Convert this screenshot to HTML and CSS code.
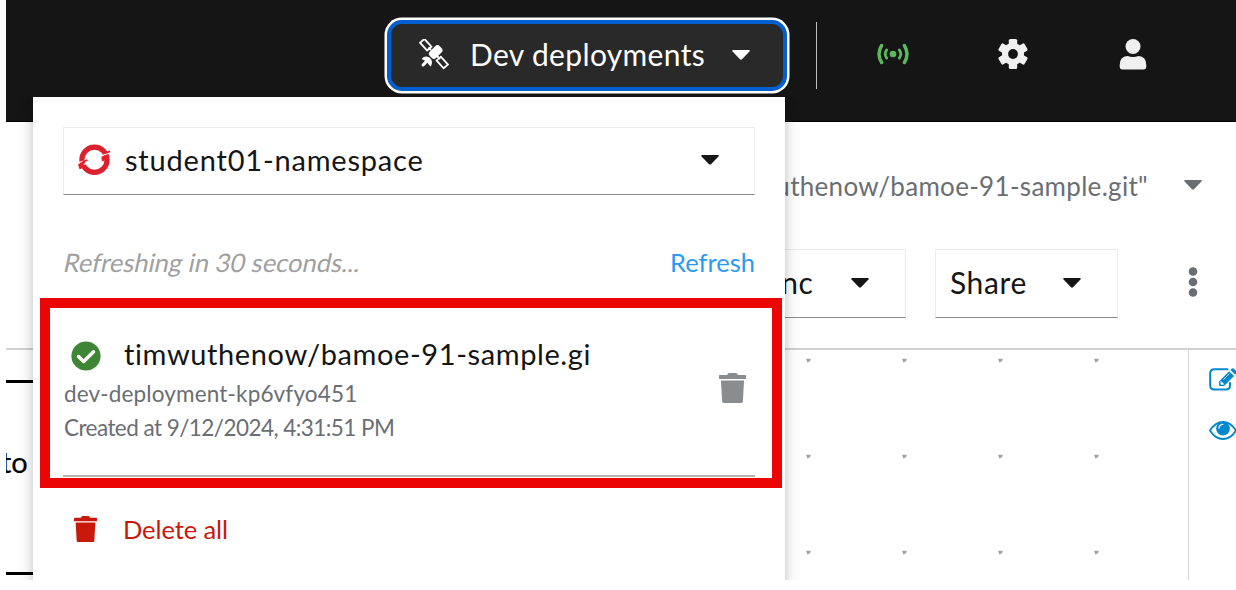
FILE: index.html
```html
<!DOCTYPE html>
<html lang="en">
<head>
<meta charset="utf-8">
<title>Dev deployments</title>
<link rel="stylesheet" href="styles.css">
</head>
<body>
<svg width="0" height="0" class="defs">
  <symbol id="caret" viewBox="0 0 18 10"><path d="M1.2 0H16.8Q18.6.2 17.2 1.8L10 9.3Q9 10.2 8 9.3L.8 1.8Q-.6.2 1.2 0Z" fill="currentColor"/></symbol>
  <symbol id="trash" viewBox="0 0 448 512" preserveAspectRatio="none"><path d="M432 32H312l-9.400-18.700A24 24 0 0 0 281.100 0H166.800a23.720 23.720 0 0 0-21.400 13.300L136 32H16A16 16 0 0 0 0 48v44a12 12 0 0 0 12 12h424a12 12 0 0 0 12-12V48a16 16 0 0 0-16-16zM32 128l20 360q2 24 26 24h292q24 0 26-24l20-360z" fill="currentColor"/></symbol>
</svg>
<div class="app">
  <header class="masthead">
    <button class="deploy-toggle">
      <svg class="satellite" width="30" height="31" viewBox="0 0 30 31">
        <g fill="none" stroke="currentColor" stroke-width="1.800">
          <rect x="1.500" y="2.800" width="10.500" height="5.800" transform="rotate(48 6.750 5.700)"/>
          <rect x="18" y="20.600" width="10.500" height="5.800" transform="rotate(48 23.250 23.500)"/>
          <path d="M9.500 8.500L12 11M18 17L21 20" stroke-width="2"/>
        </g>
        <g fill="currentColor">
          <rect x="9.700" y="8.500" width="14" height="9" rx="3.300" transform="rotate(-45 16.700 13)"/>
          <path d="M2.700 20Q5 15.600 10.600 18.600Q14.700 22.600 11.700 27.700L8.300 23.800L5.800 26.600Q4.500 28.200 2.800 27.200Q2 25.300 3.700 24.300L6 21.800Z"/>
        </g>
      </svg>
      <span class="deploy-label">Dev deployments</span>
      <svg width="18" height="10"><use href="#caret"/></svg>
    </button>
    <div class="divider"></div>
    <svg class="live" width="32" height="22" viewBox="0 0 32 22">
      <circle cx="16" cy="11" r="3.300" fill="#5cb85c"/>
      <g fill="none" stroke="#5cb85c" stroke-linecap="round">
        <path d="M4.600 2.500Q-.6 11 4.600 19.500M27.400 2.500Q32.600 11 27.400 19.500" stroke-width="3.400"/>
        <path d="M9.700 6.900Q6.700 11 9.700 15.100M22.300 6.900Q25.300 11 22.300 15.100" stroke-width="2.800"/>
      </g>
    </svg>
    <svg class="gear" width="30" height="30" viewBox="-15 -15 30 30">
      <g fill="#f0f0f0">
        <rect x="-4.200" y="-15" width="8.400" height="30" rx="1.600"/>
        <rect x="-4.200" y="-15" width="8.400" height="30" rx="1.600" transform="rotate(60)"/>
        <rect x="-4.200" y="-15" width="8.400" height="30" rx="1.600" transform="rotate(120)"/>
        <circle r="11"/>
      </g>
      <circle r="4.900" fill="#151515"/>
    </svg>
    <svg class="user" width="28" height="31" viewBox="0 0 28 31">
      <circle cx="14" cy="7.500" r="7.500" fill="#f0f0f0"/>
      <path d="M8.500 17Q14 19 19.500 17Q27.300 17.500 27.300 26V27.500Q27.300 30.500 24.500 30.500H3.500Q.7 30.500 .7 27.500V26Q.7 17.500 8.500 17Z" fill="#f0f0f0"/>
    </svg>
  </header>

  <div class="repo-row">
    <span class="repo-name">uthenow/bamoe-91-sample.git"</span>
    <svg width="18" height="10"><use href="#caret"/></svg>
  </div>
  <div class="toolbar">
    <div class="select sync"><span>Sync</span><svg width="18" height="10"><use href="#caret"/></svg></div>
    <div class="select share"><span>Share</span><svg width="18" height="10"><use href="#caret"/></svg></div>
    <svg class="kebab" width="10" height="32" viewBox="0 0 10 32" fill="#6a6e73"><circle cx="5" cy="5.500" r="4.300"/><circle cx="5" cy="16" r="4.300"/><circle cx="5" cy="26.500" r="4.300"/></svg>
  </div>
  <div class="workspace">
    <div class="node"><span>to</span></div>
    <svg class="grid" width="1182" height="230">
      <defs><pattern id="dots" x="32" y="8" width="96" height="96" patternUnits="userSpaceOnUse"><path d="M0 .8H5L4 3.300L1.500 4.800Z" fill="#a4a4a4"/></pattern></defs>
      <rect x="700" width="482" height="230" fill="url(#dots)"/>
    </svg>
    <aside class="tools">
      <svg width="28" height="23" viewBox="0 0 28 23">
        <path d="M18.500 1.200H5.500Q1.200 1.200 1.200 5.500V17.300Q1.200 21.500 5.500 21.500H17Q21 21.500 21 17.300V15" fill="none" stroke="#0088ce" stroke-width="2" stroke-linecap="round"/>
        <path d="M10.200 13.200L20.200 3.200L25 8L15 18H10.200ZM21.500 2L23 .6Q24 0 25 .8L27.500 3.200Q28.200 4.200 27.500 5.200L26.200 6.700Z" fill="#0088ce"/>
        <path d="M12 13.500L14.700 16.200H12ZM14.500 11.500L20.500 5.600" fill="#fff" stroke="#fff" stroke-width=".8"/>
      </svg>
      <svg width="28" height="19" viewBox="0 0 28 19">
        <path d="M1 9.500Q6.300 1 14 1T27 9.500Q21.700 18 14 18T1 9.500Z" fill="#fff" stroke="#0088ce" stroke-width="1.900"/>
        <circle cx="14" cy="7.600" r="6.900" fill="#0088ce"/>
        <path d="M10 7Q10.300 3.600 13.800 3.300" fill="none" stroke="#fff" stroke-width="1.300" stroke-linecap="round"/>
      </svg>
    </aside>
  </div>

  <section class="menu">
    <div class="select namespace">
      <svg width="33" height="32" viewBox="0 0 33 32">
        <circle cx="16.500" cy="15.800" r="12.600" fill="none" stroke="#db212f" stroke-width="5.200"/>
        <path d="M22.500 12.300L28 10.200M4.500 20.700L10.500 18.600M27.800 10.300L33 8.500M.3 18.800L5.500 17" stroke="#fff" stroke-width="1.200"/>
        <path d="M23.300 12.800L28.200 11.100L28.500 15.800L24 17.500ZM28 8.500L31.500 6.300L32.300 8L28.500 9.700ZM0 20.300L5.200 18.500L6.600 23.500L1.500 25.300ZM4 17.500L9 15.300L9.800 16.800L5 18.600Z" fill="#ee1c25"/>
      </svg>
      <span class="ns-name">student01-namespace</span>
      <svg class="ns-caret" width="18" height="10"><use href="#caret"/></svg>
    </div>
    <div class="refresh-row"><span class="countdown">Refreshing in 30 seconds...</span><a>Refresh</a></div>
    <div class="deployment">
      <div class="info">
        <div class="title">
          <svg width="30" height="30" viewBox="0 0 30 30"><circle cx="15" cy="15" r="14.600" fill="#3e8635"/><path d="M7.500 15.500L12.700 20.500L22.500 10.800" fill="none" stroke="#fff" stroke-width="3.500" stroke-linecap="round" stroke-linejoin="round"/></svg>
          <span>timwuthenow/bamoe-91-sample.gi</span>
        </div>
        <div class="meta id">dev-deployment-kp6vfyo451</div>
        <div class="meta created">Created at 9/12/2024, 4:31:51 PM</div>
      </div>
      <svg class="remove" width="27" height="30"><use href="#trash"/></svg>
    </div>
    <div class="delete-all"><svg width="23" height="26"><use href="#trash"/></svg><span>Delete all</span></div>
  </section>
  <div class="highlight"></div>
</div>
</body>
</html>
```
FILE: styles.css
```css
* { box-sizing: border-box; }
body { margin: 0; padding-left: 6px; background: #fff; font-family: Lato, "Open Sans", sans-serif; color: #151515; }
svg { display: block; flex: none; }
span, a { white-space: nowrap; }
.defs { position: absolute; }
.app { position: relative; width: 1230px; height: 580px; overflow: hidden; }

.masthead { height: 122px; background: #151515; border-bottom: 1px solid #000; display: flex; align-items: flex-start; color: #fff; }
.deploy-toggle { margin: 18px 0 0 379px; width: 404px; height: 75px; border: 2px solid #fff; border-radius: 17px; background: #292929; box-shadow: 0 0 0 .5px #fff, inset 0 0 0 4px #0060d0; display: flex; align-items: center; padding: 0 37px 2px 32px; color: #fff; font: 30px Lato, sans-serif; }
.deploy-label { margin: 0 0 2px 21px; flex: 1; text-align: left; letter-spacing: .35px; }
.divider { width: 1px; height: 67px; margin: 22px 0 0 27px; background: #c0c0c0; }
.live { margin: 43px 0 0 60px; }
.gear { margin: 39px 0 0 89px; }
.user { margin: 39px 0 0 91px; }

.repo-row { height: 127px; padding: 0 34px 2px 0; display: flex; justify-content: flex-end; align-items: center; color: #6a6e73; gap: 36px; }
.repo-name { font-size: 26px; letter-spacing: .3px; margin-top: 2px; }
.toolbar { height: 99px; display: flex; justify-content: flex-end; gap: 29px; padding-right: 38px; }
.select { height: 69px; border: 1px solid #ececec; border-bottom-color: #8a8d90; display: flex; align-items: center; font-size: 29px; background: #fff; }
.toolbar .select { justify-content: space-between; padding: 0 36px 2px 14px; font-size: 30px; letter-spacing: .6px; }
.toolbar .select span { margin-bottom: 1px; }
.sync { width: 172px; }
.share { width: 183px; }
.kebab { margin: 17px 0 0 41px; }
.workspace { height: 232px; border-top: 2px solid #d2d2d2; display: flex; }
.node { width: 60px; height: 195px; margin: 30px 0 0 0; border-top: 3px solid #000; border-bottom: 3px solid #000; color: #000; font-size: 29px; line-height: 157px; }
.node span { margin-left: -5px; -webkit-text-stroke: .2px #000; }
.grid { margin-left: -60px; }
.tools { width: 48px; border-left: 1px solid #d6d6d6; padding: 18px 0 0 20px; display: flex; flex-direction: column; gap: 30px; }

.menu { position: absolute; left: 27px; top: 97px; width: 752px; height: 500px; background: #fff; box-shadow: 0 8px 16px rgba(3,3,3,.16), 0 0 8px rgba(3,3,3,.12); padding: 30px; clip-path: inset(0 -30px -30px -30px); }
.namespace { height: 68px; padding: 0 35px 2px 14px; }
.ns-name { flex: 1; margin: 0 0 2px 14px; letter-spacing: .8px; }
.refresh-row { height: 103px; padding-top: 35px; display: flex; justify-content: space-between; font-size: 25.500px; line-height: 64px; }
.countdown { color: #a0a0a0; transform: skewX(-12deg); padding-left: 1px; }
.refresh-row a { color: #2b9af3; }
.deployment { height: 179px; border-bottom: 2px solid #b4b4b4; display: flex; justify-content: space-between; padding-top: 36px; }
.title { display: flex; align-items: center; gap: 23px; height: 43px; padding-left: 8px; font-size: 29px; letter-spacing: .6px; }
.title span { margin-bottom: 5px; }
.meta { color: #6a6e73; font-size: 22.500px; line-height: 34px; padding-left: 1px; }
.id { letter-spacing: .15px; }
.created { letter-spacing: -.55px; }
.remove { margin: 39px 9px 0 0; color: #8a8d90; }
.delete-all { color: #c9190b; display: flex; align-items: center; gap: 26px; padding: 0 0 0 11px; height: 104px; font-size: 25.500px; letter-spacing: -.1px; }
.highlight { position: absolute; left: 34px; top: 298px; width: 742px; height: 190px; border: 10px solid #eb0505; }
```
